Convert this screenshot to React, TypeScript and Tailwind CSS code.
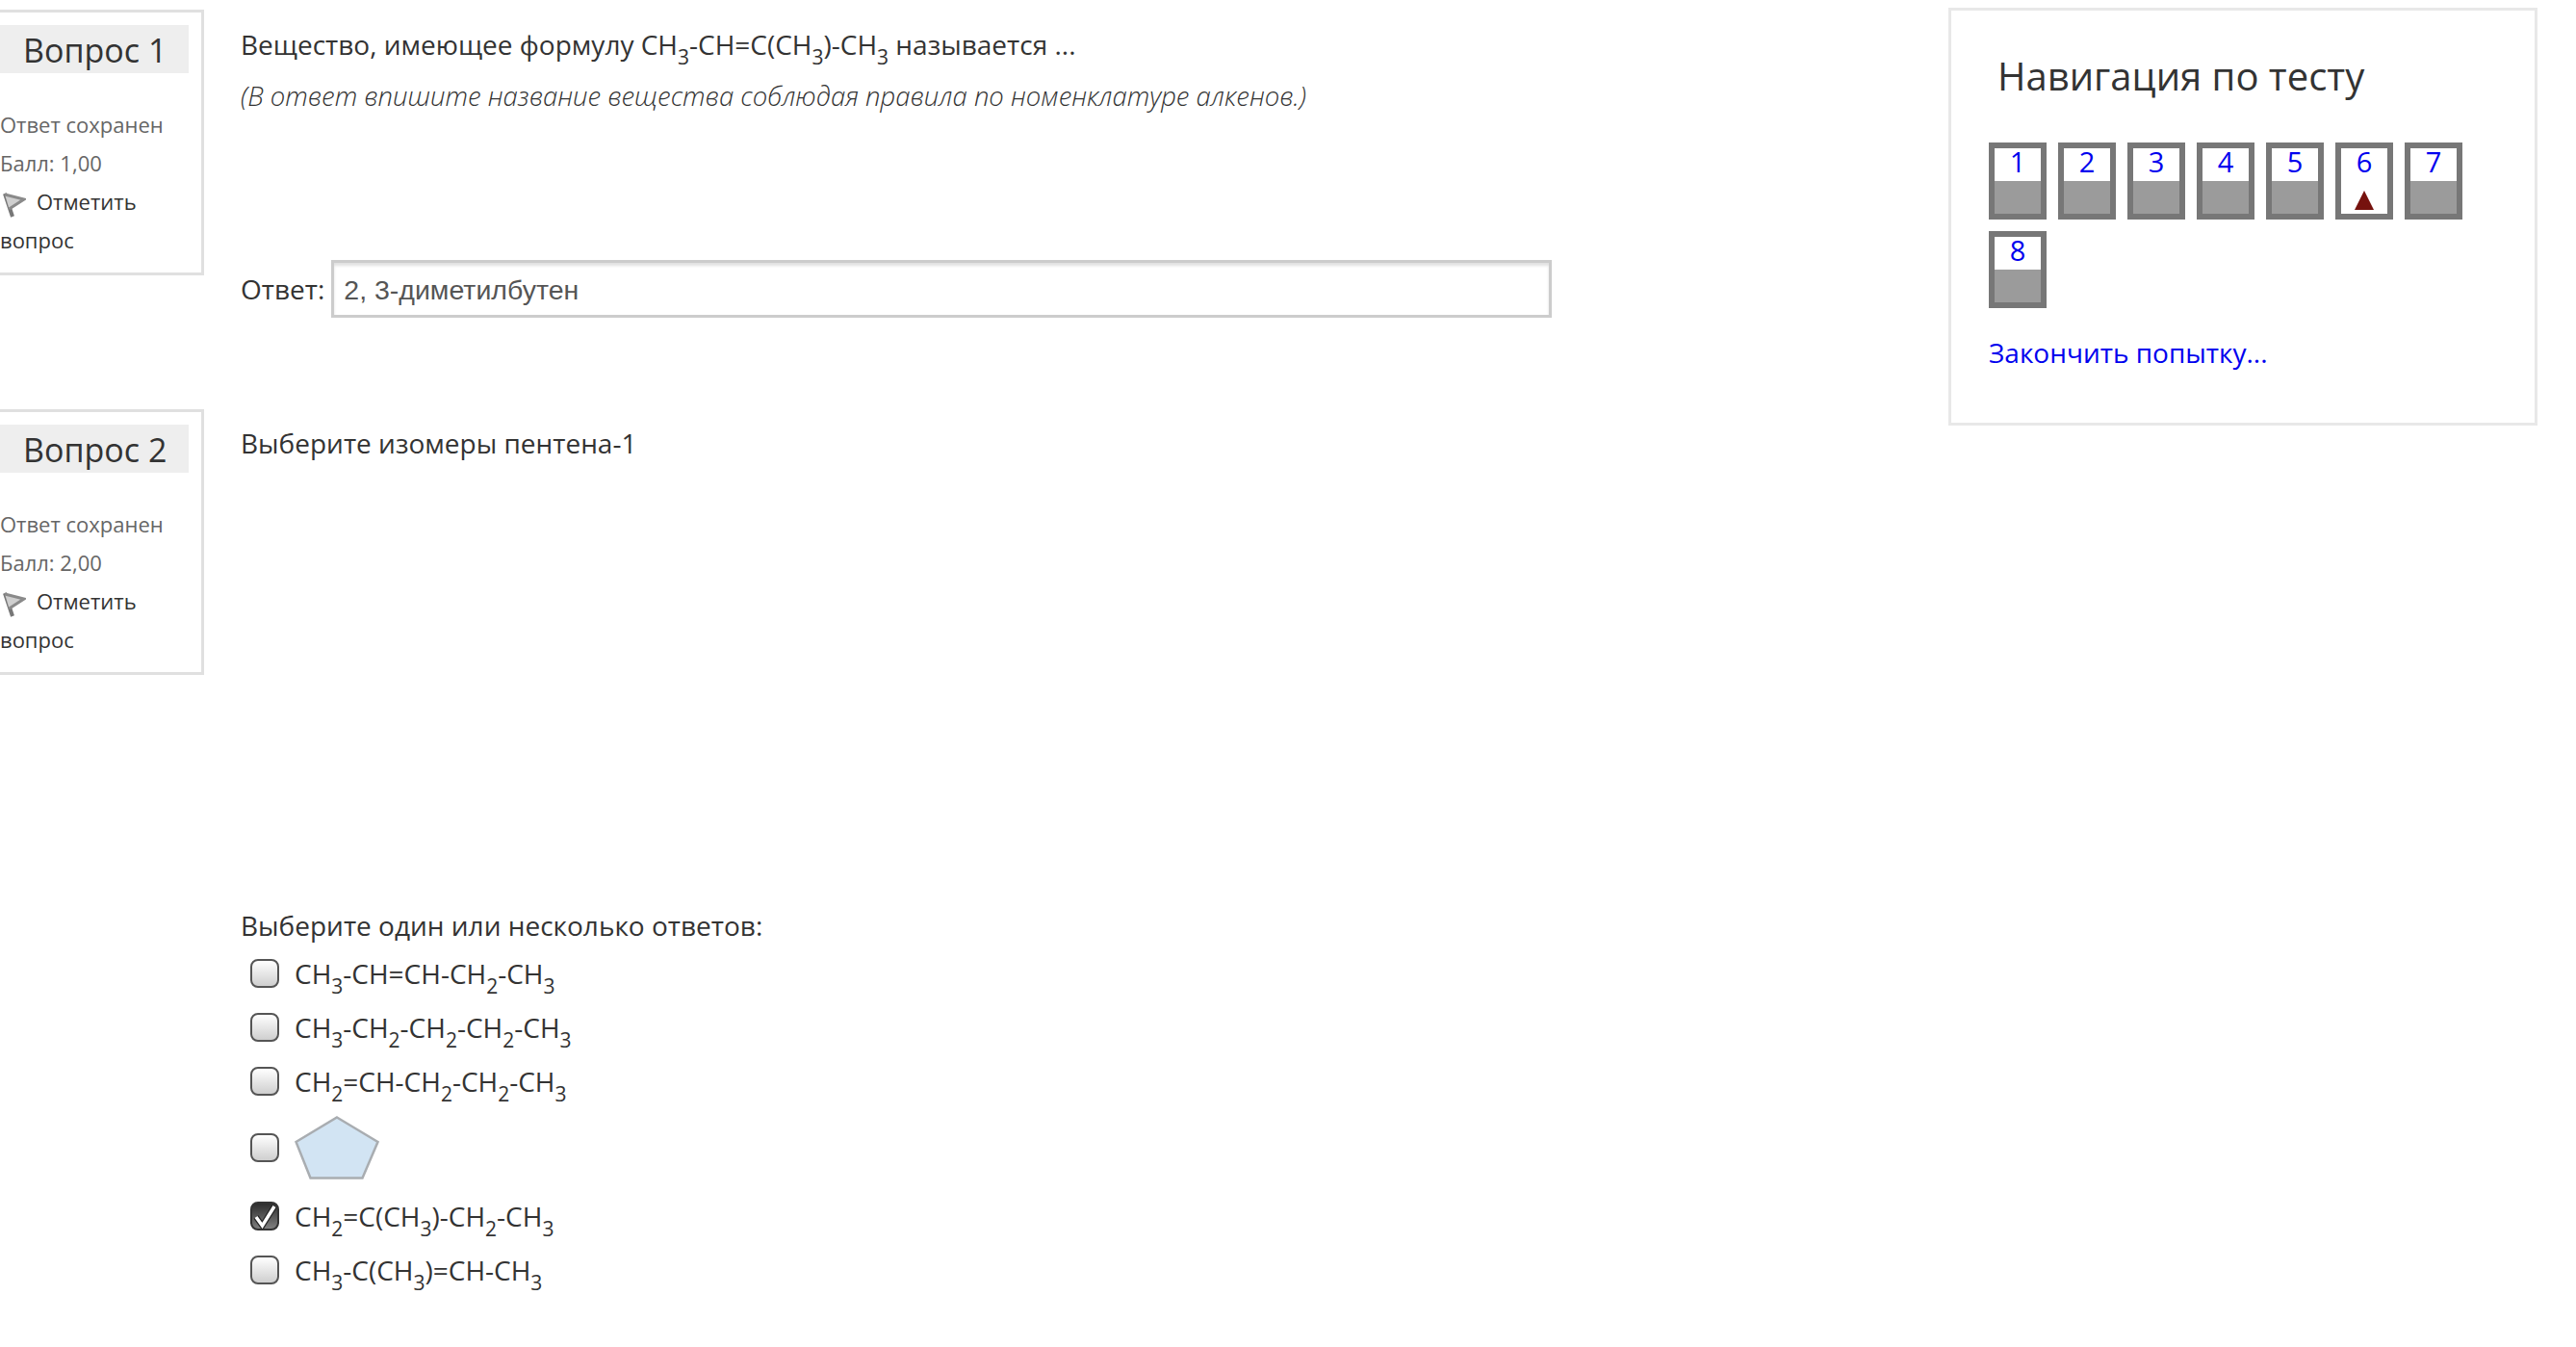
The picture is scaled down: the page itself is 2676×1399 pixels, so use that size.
import React from 'react';

const Sub: React.FC<{ children: React.ReactNode }> = ({ children }) => (
  <sub className="-bottom-[10px] text-[21px]">{children}</sub>
);

// turns "CH3-CH=CH2" into text with the digits set as subscripts
const Formula: React.FC<{ text: string }> = ({ text }) => (
  <span>
    {text.split(/(\d)/).map((part, index) =>
      /\d/.test(part) ? <Sub key={index}>{part}</Sub> : <span key={index}>{part}</span>
    )}
  </span>
);

const FlagIcon: React.FC = () => (
  <svg width="26" height="28" viewBox="0 0 26 28" className="ml-[1px] mr-[11px] mt-[7px] inline-block shrink-0 blur-[0.7px]">
    <path d="M4 2 L12 26" stroke="#777" strokeWidth="4" fill="none" />
    <path d="M4 3 L24 8 L8.5 18" stroke="#8a8a8a" strokeWidth="3" fill="#cfcfcf" />
  </svg>
);

const InfoBox: React.FC<{ num: number; grade: string }> = ({ num, grade }) => (
  <div className="-ml-[3px] h-[276px] w-[215px] shrink-0 border-[3px] border-[#e0e0e0] pt-[13px]">
    <div className="flex h-[50px] w-[196px] items-center bg-[#eeeeee] pl-[24px] pt-[2px] text-[34px] text-[#333]">
      Вопрос {num}
    </div>
    <div className="mt-[33px] text-[22px] leading-[40px] text-[#666]">
      <div>Ответ сохранен</div>
      <div>Балл: {grade}</div>
      <div className="flex items-center text-[#333]">
        <FlagIcon />
        Отметить
      </div>
      <div className="text-[#333]">вопрос</div>
    </div>
  </div>
);

const Checkbox: React.FC<{ checked?: boolean }> = ({ checked }) =>
  checked ? (
    <span className="mr-[16px] flex h-[30px] w-[30px] shrink-0 items-center justify-center rounded-[8px] border-[2px] border-[#333] bg-linear-to-b from-[#2e2e2e] to-[#808080]">
      <svg width="26" height="26" viewBox="0 0 26 26">
        <path d="M4 14 L10.5 23 L23 3" stroke="#222" strokeWidth="6" fill="none" />
        <path d="M4 14 L10.5 23 L23 3" stroke="#fff" strokeWidth="3.5" fill="none" />
      </svg>
    </span>
  ) : (
    <span className="mr-[16px] h-[30px] w-[30px] shrink-0 rounded-[8px] border-[2px] border-[#555] bg-linear-to-b from-white to-[#cfcfcf]" />
  );

const Pentagon: React.FC = () => (
  <svg width="88" height="66" viewBox="0 0 88 66">
    <polygon points="44,1.5 86.5,27 70.5,64.5 16.5,64.5 1.5,27" fill="#d2e4f3" stroke="#a9adb1" strokeWidth="2.5" />
  </svg>
);

const options = ['CH3-CH=CH-CH2-CH3', 'CH3-CH2-CH2-CH2-CH3', 'CH2=CH-CH2-CH2-CH3'];

const navItems = [1, 2, 3, 4, 5, 6, 7, 8];

const NavButton: React.FC<{ num: number }> = ({ num }) => {
  const current = num === 6;
  return (
    <div className="flex h-[80px] w-[60px] flex-col border-[6px] border-[#777777]">
      <div className="h-[34px] bg-white text-center text-[29px] leading-[28px] text-[#0000ee]">{num}</div>
      <div className={current ? 'flex h-[34px] items-end justify-center bg-white pb-[4px]' : 'h-[34px] bg-[#9b9b9b]'}>
        {current && (
          <svg width="20" height="20" viewBox="0 0 20 20">
            <polygon points="10,0 20,20 0,20" fill="#76120e" />
          </svg>
        )}
      </div>
    </div>
  );
};

const App: React.FC = () => {
  return (
    <div className="flex h-[1399px] w-[2676px] justify-between overflow-hidden bg-white font-['Open_Sans',sans-serif] text-[28px] leading-[40px] text-[#333]">
      <div>
        <section className="flex h-[425px] pt-[10px]">
          <InfoBox num={1} grade="1,00" />
          <div className="ml-[38px] pt-[16px]">
            <p>
              Вещество, имеющее формулу <Formula text="CH3-CH=C(CH3)-CH3" /> называется ...
            </p>
            <p className="mt-[14px] text-[27.5px] font-light italic">
              (В ответ впишите название вещества соблюдая правила по номенклатуре алкенов.)
            </p>
            <div className="mt-[150px] flex items-center">
              <span className="mr-[7px]">Ответ:</span>
              <div className="flex h-[60px] w-[1268px] items-center border-[3px] border-[#cccccc] pl-[10px] pt-[2px] font-['Liberation_Sans',sans-serif] text-[28.5px] text-[#555] shadow-[inset_0_3px_3px_rgba(0,0,0,0.12)]">
                2, 3-диметилбутен
              </div>
            </div>
          </div>
        </section>

        <section className="flex">
          <InfoBox num={2} grade="2,00" />
          <div className="ml-[38px] pt-[15px]">
            <p>Выберите изомеры пентена-1</p>
            <p className="mt-[461px]">Выберите один или несколько ответов:</p>
            <div className="ml-[10px] mt-[2px]">
              {options.map((option, index) => (
                <div key={index} className="flex h-[56px] items-center">
                  <Checkbox />
                  <Formula text={option} />
                </div>
              ))}
              <div className="mb-[2px] flex h-[82px] items-center">
                <Checkbox />
                <Pentagon />
              </div>
              <div className="flex h-[56px] items-center">
                <Checkbox checked />
                <Formula text="CH2=C(CH3)-CH2-CH3" />
              </div>
              <div className="flex h-[56px] items-center">
                <Checkbox />
                <Formula text="CH3-C(CH3)=CH-CH3" />
              </div>
            </div>
          </div>
        </section>
      </div>

      <aside className="mr-[40px] mt-[8px] h-[434px] w-[612px] border-[3px] border-[#e8e8e8] pl-[39px] pt-[41px]">
        <h2 className="pl-[9px] text-[40px] leading-[54px] text-[#333]">Навигация по тесту</h2>
        <div className="mt-[42px] flex w-[520px] flex-wrap gap-x-[12px] gap-y-[12px]">
          {navItems.map((num) => (
            <NavButton key={num} num={num} />
          ))}
        </div>
        <a className="mt-[26px] block text-[28px] text-[#0000ee]">Закончить попытку...</a>
      </aside>
    </div>
  );
};

export default App;
